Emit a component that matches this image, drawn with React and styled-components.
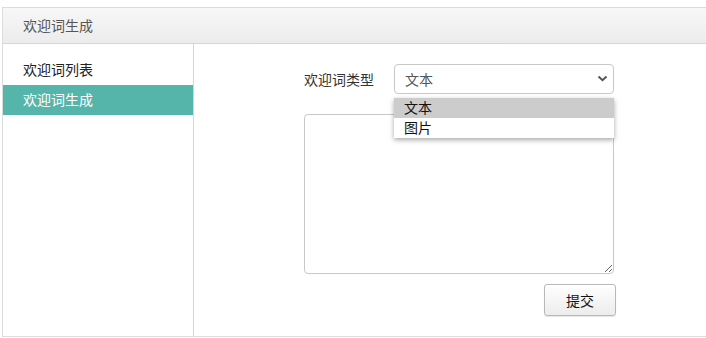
import React from "react";
import styled, { createGlobalStyle } from "styled-components";

const Global = createGlobalStyle`
  html, body { margin: 0; padding: 0; background: #fff; overflow: hidden; }
  body { font-family: "Microsoft YaHei", "Noto Sans CJK SC", "Noto Sans", sans-serif; font-size: 14px; }
`;

const Panel = styled.div`
  margin: 7px 0 0 2px;
  width: 720px;
  height: 328px;
  border: 1px solid #dcdcdc;
  display: flex;
  flex-direction: column;
  box-sizing: content-box;
`;

const Header = styled.div`
  height: 35px;
  flex: none;
  background: linear-gradient(#f7f7f7, #ececec);
  border-bottom: 1px solid #d6d6d6;
  display: flex;
  align-items: center;
  padding-left: 20px;
  padding-bottom: 1px;
  box-sizing: border-box;
  height: 36px;
  color: #555;
  font-size: 14px;
`;

const Body = styled.div`
  flex: 1;
  display: flex;
  min-height: 0;
`;

const Sidebar = styled.div`
  width: 190px;
  flex: none;
  border-right: 1px solid #d6d6d6;
  padding-top: 11px;
`;

const NavItem = styled.div`
  height: 30px;
  line-height: 28px;
  padding-left: 20px;
  font-size: 14px;
  color: ${(p) => (p.$active ? "#fff" : "#222")};
  background: ${(p) => (p.$active ? "#56b5aa" : "transparent")};
`;

const Main = styled.div`
  flex: 1;
  padding: 20px 0 0 110px;
`;

const Form = styled.div`
  width: 312px;
  display: flex;
  flex-direction: column;
`;

const Row = styled.div`
  display: flex;
  align-items: center;
  position: relative;
`;

const Label = styled.div`
  width: 90px;
  color: #333;
  font-size: 14px;
  line-height: 28px;
`;

const SelectBox = styled.div`
  width: 220px;
  height: 30px;
  box-sizing: border-box;
  border: 1px solid #c8c8c8;
  border-radius: 4px;
  display: flex;
  align-items: center;
  justify-content: space-between;
  padding: 0 5px 1px 10px;
  color: #555;
  font-size: 14px;
  background: #fff;
`;

const Dropdown = styled.div`
  position: absolute;
  left: 90px;
  top: 34px;
  width: 220px;
  background: #fff;
  box-shadow: 0 2px 5px rgba(0, 0, 0, 0.35);
  z-index: 2;
`;

const Option = styled.div`
  height: 20px;
  line-height: 19px;
  padding-left: 10px;
  color: #111;
  font-size: 14px;
  background: ${(p) => (p.$selected ? "#cccccc" : "#fff")};
`;

const TextArea = styled.textarea`
  margin-top: 20px;
  width: 310px;
  height: 160px;
  box-sizing: border-box;
  border: 1px solid #c8c8c8;
  border-radius: 4px;
  resize: both;
  outline: none;
  font-family: inherit;
`;

const Actions = styled.div`
  display: flex;
  justify-content: flex-end;
  margin-top: 10px;
`;

const Button = styled.button`
  width: 72px;
  height: 32px;
  border: 1px solid #b8b8b8;
  border-radius: 3px;
  background: linear-gradient(#ffffff, #ececec);
  box-shadow: 0 1px 1px rgba(0, 0, 0, 0.1);
  font-family: inherit;
  font-size: 14px;
  color: #111;
  padding: 0 0 1px;
`;

const Chevron = () => (
  <svg width="11" height="7" viewBox="0 0 11 7">
    <path d="M1.5 1.5 L5.5 5.2 L9.5 1.5" fill="none" stroke="#555" strokeWidth="2" />
  </svg>
);

export default function App() {
  return (
    <>
      <Global />
      <Panel>
        <Header>欢迎词生成</Header>
        <Body>
          <Sidebar>
            <NavItem>欢迎词列表</NavItem>
            <NavItem $active>欢迎词生成</NavItem>
          </Sidebar>
          <Main>
            <Form>
              <Row>
                <Label>欢迎词类型</Label>
                <SelectBox>
                  <span>文本</span>
                  <Chevron />
                </SelectBox>
                <Dropdown>
                  <Option $selected>文本</Option>
                  <Option>图片</Option>
                </Dropdown>
              </Row>
              <TextArea />
              <Actions>
                <Button>提交</Button>
              </Actions>
            </Form>
          </Main>
        </Body>
      </Panel>
    </>
  );
}
